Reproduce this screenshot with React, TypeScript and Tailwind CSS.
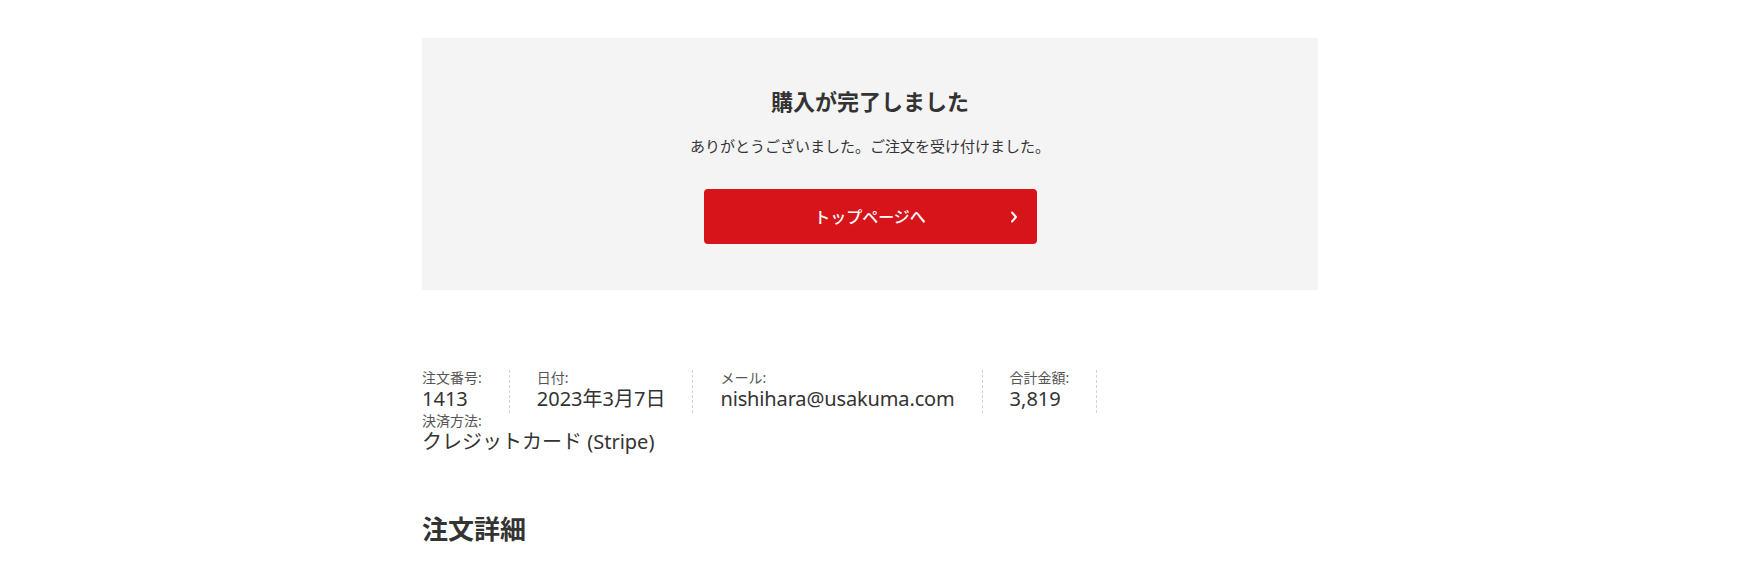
import React from 'react';

type OrderInfo = {
  label: string;
  value: string;
  tight?: boolean;
};

const overview: OrderInfo[] = [
  { label: '注文番号:', value: '1413' },
  { label: '日付:', value: '2023年3月7日' },
  { label: 'メール:', value: 'nishihara@usakuma.com', tight: true },
  { label: '合計金額:', value: '3,819' },
];

const ChevronRight: React.FC = () => (
  <svg width="8" height="12" viewBox="0 0 8 12" fill="none" className="block">
    <polyline points="2,1.5 6,6 2,10.5" stroke="white" strokeWidth="2" strokeLinecap="round" strokeLinejoin="round" />
  </svg>
);

const App: React.FC = () => {
  return (
    <div className="min-h-screen bg-white text-[#333] font-['Noto_Sans','Noto_Sans_CJK_JP',sans-serif] pt-[38px] pb-20">
      <div className="max-w-[896px] mx-auto">
        {/* Thank you box */}
        <div className="bg-[#f4f4f4] pt-[47px] pb-[46px] flex flex-col items-center">
          <h2 className="text-[22px] leading-[33px] font-bold tracking-normal">購入が完了しました</h2>
          <p className="mt-4 text-[15px] leading-[24px]">ありがとうございました。ご注文を受け付けました。</p>
          <a
            href="#"
            className="mt-[31px] relative w-[333px] h-[55px] rounded bg-[#d7141a] text-white flex items-center justify-center text-base font-medium hover:bg-[#c01218] transition-colors"
          >
            トップページへ
            <span className="absolute right-[19px] top-1/2 -translate-y-1/2">
              <ChevronRight />
            </span>
          </a>
        </div>

        {/* Order overview */}
        <ul className="mt-[80px] flex">
          {overview.map((item, i) => (
            <li
              key={item.label}
              className={`flex flex-col border-r border-dashed border-[#d3d3d3] pr-[27px] ${i === 0 ? 'pl-0' : 'pl-[27px]'}`}
            >
              <span className="text-[14px] leading-[15px] text-[#555]">{item.label}</span>
              <span className={`text-[20px] leading-[28px] text-[#333] ${item.tight ? 'tracking-[-0.007em]' : ''}`}>
                {item.value}
              </span>
            </li>
          ))}
        </ul>
        <div className="flex flex-col">
          <span className="text-[14px] leading-[15px] text-[#555]">決済方法:</span>
          <span className="text-[20px] leading-[28px] text-[#333]">クレジットカード (Stripe)</span>
        </div>

        {/* Order details */}
        <h2 className="mt-[54px] text-[26px] leading-[39px] font-bold">注文詳細</h2>
      </div>
    </div>
  );
};

export default App;
